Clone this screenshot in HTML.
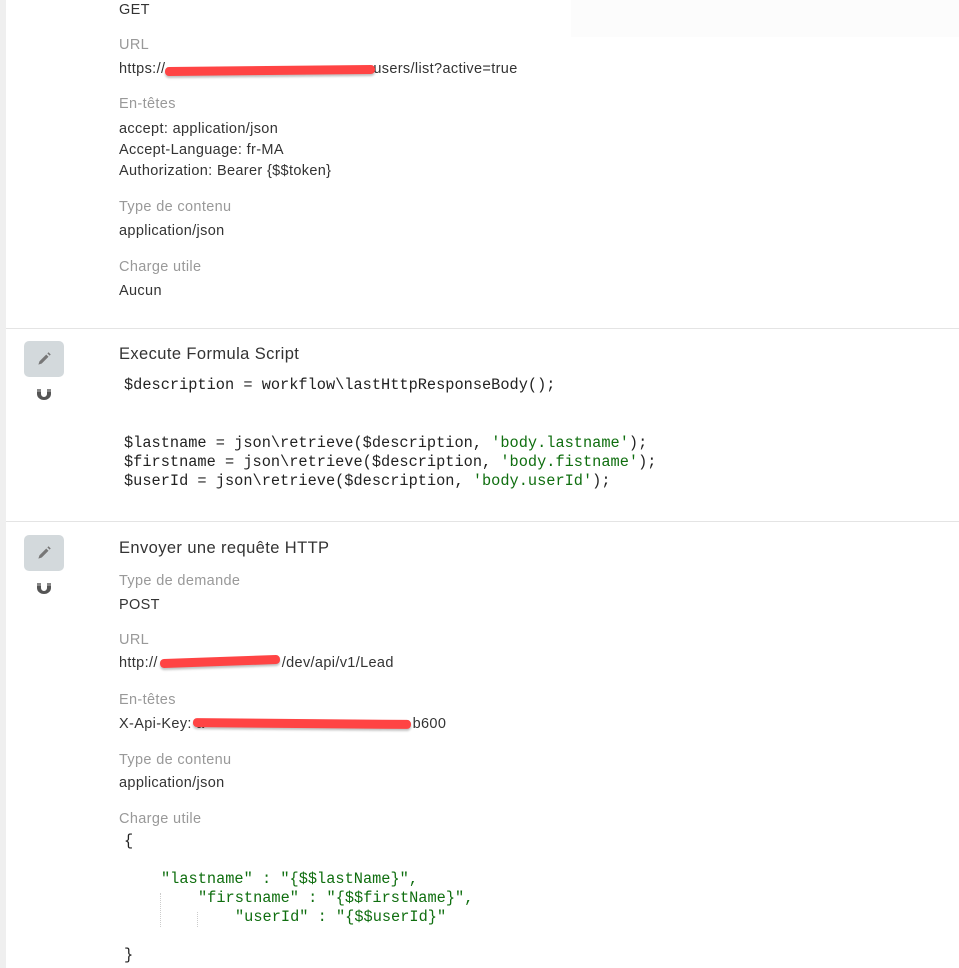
<!DOCTYPE html>
<html><head><meta charset="utf-8"><style>
body{margin:0;width:959px;height:968px;background:#fff;position:relative;overflow:hidden;font-family:"Liberation Sans",sans-serif;}
.strip{position:absolute;left:0;top:0;width:6px;height:968px;background:#efefef;}
.hr{position:absolute;left:6px;right:0;height:1px;background:#e4e4e4;}
.t{position:absolute;left:119px;font-size:14.5px;letter-spacing:.35px;line-height:20px;color:#333;white-space:nowrap;}
.l{color:#999;}
.h{font-size:16.5px;letter-spacing:.4px;color:#333;}
.c{position:absolute;left:124px;font-family:"Liberation Mono",monospace;font-size:15.3px;line-height:19px;color:#222;white-space:pre;}
.g{color:#0f6e0f;}
.btn{position:absolute;left:24px;width:40px;height:36px;background:#d3d9dc;border-radius:5px;}
.red{position:absolute;height:9px;background:#ff4444;border-radius:4px;box-shadow:0 2px 2px rgba(0,0,0,.25);}
.box{position:absolute;left:571px;top:0;width:388px;height:37px;background:#fcfcfc;}
</style></head><body>
<div class="strip"></div>
<div class="box"></div>
<div class="t" style="top:0">GET</div>
<div class="t l" style="top:35px">URL</div>
<div class="t" style="top:59px">https://<span style="display:inline-block;width:208px"></span>users/list?active=true</div>
<div class="red" style="left:165px;top:66px;width:210px;transform:rotate(-.6deg)"></div>
<div class="t l" style="top:94px">En-têtes</div>
<div class="t" style="top:119px">accept: application/json</div>
<div class="t" style="top:140px">Accept-Language: fr-MA</div>
<div class="t" style="top:161px">Authorization: Bearer {$$token}</div>
<div class="t l" style="top:197px">Type de contenu</div>
<div class="t" style="top:221px">application/json</div>
<div class="t l" style="top:257px">Charge utile</div>
<div class="t" style="top:281px">Aucun</div>
<div class="hr" style="top:328px"></div>

<div class="btn" style="top:341px"></div>
<svg style="position:absolute;left:35px;top:350px" width="18" height="18" viewBox="0 0 16 16"><path d="M3 13l1-3 6-6 2 2-6 6z M11 3l1-1 2 2-1 1z" fill="#777"/></svg>
<svg style="position:absolute;left:37px;top:389px" width="14" height="11" viewBox="0 0 14 11"><path d="M0 0h4v5a3 3 0 0 0 6 0V0h4v5a7 6 0 0 1-14 0z" fill="#555"/><rect x="0" y="0" width="4" height="3" fill="#888"/><rect x="10" y="0" width="4" height="3" fill="#888"/></svg>
<div class="t h" style="top:344px">Execute Formula Script</div>
<div class="c" style="top:376px">$description = workflow\lastHttpResponseBody();</div>
<div class="c" style="top:434px">$lastname = json\retrieve($description, <span class="g">'body.lastname'</span>);
$firstname = json\retrieve($description, <span class="g">'body.fistname'</span>);
$userId = json\retrieve($description, <span class="g">'body.userId'</span>);</div>
<div class="hr" style="top:521px"></div>

<div class="btn" style="top:535px"></div>
<svg style="position:absolute;left:35px;top:544px" width="18" height="18" viewBox="0 0 16 16"><path d="M3 13l1-3 6-6 2 2-6 6z M11 3l1-1 2 2-1 1z" fill="#777"/></svg>
<svg style="position:absolute;left:37px;top:583px" width="14" height="11" viewBox="0 0 14 11"><path d="M0 0h4v5a3 3 0 0 0 6 0V0h4v5a7 6 0 0 1-14 0z" fill="#555"/><rect x="0" y="0" width="4" height="3" fill="#888"/><rect x="10" y="0" width="4" height="3" fill="#888"/></svg>
<div class="t h" style="top:538px">Envoyer une requête HTTP</div>
<div class="t l" style="top:571px">Type de demande</div>
<div class="t" style="top:595px">POST</div>
<div class="t l" style="top:630px">URL</div>
<div class="t" style="top:653px">http://<span style="display:inline-block;width:124px"></span>/dev/api/v1/Lead</div>
<div class="red" style="left:160px;top:657px;width:120px;transform:rotate(-2deg)"></div>
<div class="t l" style="top:690px">En-têtes</div>
<div class="t" style="top:714px">X-Api-Key: a<span style="display:inline-block;width:208px"></span>b600</div>
<div class="red" style="left:193px;top:719px;width:218px;transform:rotate(.5deg)"></div>
<div class="t l" style="top:750px">Type de contenu</div>
<div class="t" style="top:773px">application/json</div>
<div class="t l" style="top:809px">Charge utile</div>
<div class="c" style="top:832px">{</div>
<div class="c g" style="top:870px;left:161px">"lastname" : "{$$lastName}",</div>
<div class="c g" style="top:889px;left:198px">"firstname" : "{$$firstName}",</div>
<div class="c g" style="top:908px;left:235px">"userId" : "{$$userId}"</div>
<div style="position:absolute;left:160px;top:893px;width:0;height:34px;border-left:1px dotted #ccc"></div>
<div style="position:absolute;left:197px;top:912px;width:0;height:15px;border-left:1px dotted #ccc"></div>
<div class="c" style="top:946px">}</div>
</body></html>
